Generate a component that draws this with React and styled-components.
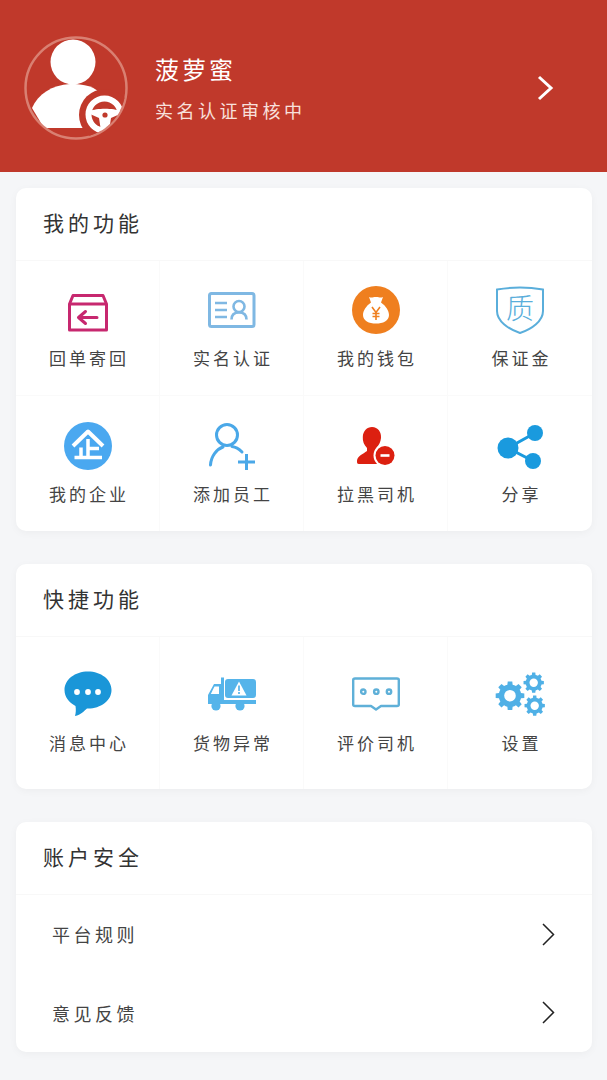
import React from "react";
import styled, { createGlobalStyle } from "styled-components";

const GlobalStyle = createGlobalStyle`
  html, body {
    margin: 0;
    padding: 0;
    background: #f5f6f8;
    font-family: "Noto Sans CJK SC", "Noto Sans", sans-serif;
    font-weight: 400;
  }
`;

const AvatarIcon = () => (
  <svg width="104" height="104" viewBox="0 0 104 104">
    <defs>
      <clipPath id="avatarClip">
        <circle cx="52" cy="52" r="49.5" />
      </clipPath>
    </defs>
    <circle cx="52" cy="52" r="50.5" fill="none" stroke="#d98072" strokeWidth="2.5" />
    <g clipPath="url(#avatarClip)">
      <circle cx="49" cy="26" r="22.5" fill="#fff" />
      <path d="M8 72C14 58 28 49 46 48C60 48 72 50 78 60L78 92H20Z" fill="#fff" />
      <circle cx="81" cy="79" r="26" fill="#c0392b" />
      <circle cx="80.500" cy="78.500" r="16" fill="none" stroke="#fff" strokeWidth="6" />
      <path d="M66 75C72 72 90 72 96 75L96 78L87 82L85 95L77 95L75 82L66 78Z" fill="#fff" />
      <circle cx="81" cy="79" r="2.600" fill="#c0392b" />
    </g>
  </svg>
);

const ReturnIcon = () => (
  <svg width="48" height="48" viewBox="0 0 48 48" fill="none" stroke="#c7286f">
    <path d="M5.500 44V18L9 9.500H39L42.500 18V44Z" strokeWidth="3" strokeLinejoin="round" />
    <path d="M5.500 18H42.500" strokeWidth="2.800" />
    <path d="M33 31.500H15M21.500 25.500L14.500 31.500L21.500 37.500" strokeWidth="3" strokeLinecap="round" strokeLinejoin="round" />
  </svg>
);

const IdCardIcon = () => (
  <svg width="48" height="48" viewBox="0 0 48 48" fill="none" stroke="#7fb8e3">
    <rect x="1.500" y="7.500" width="44.500" height="33" rx="2" strokeWidth="3" />
    <path d="M7 17H19M7 24H19M7 31H19" strokeWidth="2.600" />
    <circle cx="31" cy="20.500" r="5.500" strokeWidth="2.600" />
    <path d="M23.500 33.500C23.500 28.500 27 26.500 31 26.500C35 26.500 38.500 28.500 38.500 33.500" strokeWidth="2.600" />
  </svg>
);

const WalletIcon = () => (
  <svg width="48" height="48" viewBox="0 0 48 48">
    <circle cx="24" cy="24" r="24" fill="#ef7f1f" />
    <path d="M17 11C20 12.500 22 10.500 24 11C26 10.500 28 12.500 31 11L29 16.500C34 20 37 25 37 29C37 35 31 37.500 24 37.500C17 37.500 11 35 11 29C11 25 14 20 19 16.500Z" fill="#fff" />
    <path d="M20 21L24 26.500L28 21M24 26.500V34M20.500 27.500H27.500M20.500 30.500H27.500" fill="none" stroke="#ef7f1f" strokeWidth="1.600" />
  </svg>
);

const ShieldIcon = () => (
  <svg width="48" height="48" viewBox="0 0 48 48">
    <path d="M1 3.500C16 1 32 1 47 3.500V25C47 35 36 43 24 47C12 43 1 35 1 25Z" fill="none" stroke="#5aaedb" strokeWidth="2" />
    <ShieldGlyph x="24" y="33" textAnchor="middle">质</ShieldGlyph>
  </svg>
);

const CompanyIcon = () => (
  <svg width="48" height="48" viewBox="0 0 48 48">
    <circle cx="24" cy="24" r="24" fill="#4aa8f0" />
    <path d="M9 24L24 9.500L39 24" fill="none" stroke="#fff" strokeWidth="4" strokeLinejoin="round" />
    <path d="M10.500 35.500H38M17 25.500V35.500M24 17V35.500M24 26.500H35" fill="none" stroke="#fff" strokeWidth="3.500" />
  </svg>
);

const AddUserIcon = () => (
  <svg width="48" height="48" viewBox="0 0 48 48" fill="none" stroke="#4aa8e8" strokeWidth="3">
    <circle cx="19" cy="13" r="10.500" />
    <path d="M2.500 43C3 34 9 27 15 25M24 24.500C28 25 31 27 34 30" strokeLinecap="round" />
    <path d="M30 40H47M38.500 32V48" />
  </svg>
);

const BlockUserIcon = () => (
  <svg width="48" height="48" viewBox="0 0 48 48">
    <path d="M20 5C26 5 29.500 10 29 16C28.600 20 27 23 25 25L25 27C27 28.500 30 29 33 31L33 42H7C5 42 5 41 5 39C5 34 11 32 15 29L15 26C12 23 10.500 19 10.800 15C11 9 15 5 20 5Z" fill="#dc2010" />
    <circle cx="33" cy="33.500" r="11.500" fill="#fff" />
    <circle cx="33" cy="33.500" r="9.500" fill="#dc2010" />
    <rect x="28.500" y="32.200" width="9" height="2.600" fill="#fff" />
  </svg>
);

const ShareIcon = () => (
  <svg width="48" height="48" viewBox="0 0 48 48" fill="#1a9ade">
    <path d="M12 26L39 11M12 26L37 39" stroke="#1a9ade" strokeWidth="3" />
    <circle cx="12" cy="26" r="10.500" />
    <circle cx="39" cy="11" r="8" />
    <circle cx="37" cy="39" r="8" />
  </svg>
);

const MessageIcon = () => (
  <svg width="48" height="48" viewBox="0 0 48 48">
    <path d="M24 0.500C37 0.500 47.500 8.500 47.500 19C47.500 30 36 38 23 37.500C20 40 17 44 11 45C12 42 12 38 11.500 35C5 31.500 0.500 26 0.500 19C0.500 8.500 11 0.500 24 0.500Z" fill="#1a96d8" />
    <circle cx="13" cy="21" r="2.900" fill="#fff" />
    <circle cx="24" cy="21" r="2.900" fill="#fff" />
    <circle cx="34" cy="21" r="2.900" fill="#fff" />
  </svg>
);

const TruckIcon = () => (
  <svg width="48" height="48" viewBox="0 0 48 48">
    <rect x="17" y="8" width="31" height="19" rx="3" fill="#55b4ea" />
    <path d="M13 6.500H16V29H48V33H0V24L6 13H13Z" fill="#55b4ea" />
    <circle cx="8" cy="35" r="4.600" fill="#55b4ea" />
    <circle cx="32" cy="35" r="4.600" fill="#55b4ea" />
    <path d="M6.500 15.500H11V23H2.800Z" fill="#fff" />
    <path d="M31 10.500L38.500 24.500H23.500Z" fill="#fff" />
    <path d="M31 14.500V20M31 21V23" stroke="#55b4ea" strokeWidth="1.700" />
  </svg>
);

const CommentIcon = () => (
  <svg width="48" height="48" viewBox="0 0 48 48" fill="none" stroke="#5fb0d8" strokeWidth="2.400">
    <path d="M3 7.500H45C46 7.500 46.800 8 46.800 9V33.500C46.800 34.500 46 35 45 35H29L24 38.500L19 35H3C2 35 1.200 34.500 1.200 33.500V9C1.200 8 2 7.500 3 7.500Z" strokeLinejoin="round" />
    <circle cx="11.300" cy="20.700" r="2.200" />
    <circle cx="24.300" cy="20.700" r="2.200" />
    <circle cx="37" cy="20.700" r="2.200" />
  </svg>
);

const gearPath = (cx, cy, r, teeth) => {
  const pts = [];
  const toothDepth = r * 0.78;
  const step = (Math.PI * 2) / teeth;
  const at = (rad, ang) => `${(cx + rad * Math.cos(ang)).toFixed(2)} ${(cy + rad * Math.sin(ang)).toFixed(2)}`;
  for (let i = 0; i < teeth; i++) {
    const a = i * step;
    pts.push(at(toothDepth, a - step * 0.5), at(toothDepth, a - step * 0.3), at(r, a - step * 0.2), at(r, a + step * 0.2), at(toothDepth, a + step * 0.3));
  }
  return `M${pts.join("L")}Z`;
};

const GearsIcon = () => (
  <svg width="50" height="48" viewBox="0 0 50 48" fill="#4fb0e6">
    <path d={gearPath(15, 24.700, 14.500, 8)} />
    <circle cx="15" cy="24.700" r="5.800" fill="#fff" />
    <path d={gearPath(38.700, 11.700, 10.300, 8)} />
    <circle cx="38.700" cy="11.700" r="4.200" fill="#fff" />
    <path d={gearPath(39.700, 34.700, 10.300, 8)} />
    <circle cx="39.700" cy="34.700" r="4.200" fill="#fff" />
  </svg>
);

const myFunctions = [
  { label: "回单寄回", Icon: ReturnIcon },
  { label: "实名认证", Icon: IdCardIcon },
  { label: "我的钱包", Icon: WalletIcon },
  { label: "保证金", Icon: ShieldIcon },
  { label: "我的企业", Icon: CompanyIcon },
  { label: "添加员工", Icon: AddUserIcon },
  { label: "拉黑司机", Icon: BlockUserIcon },
  { label: "分享", Icon: ShareIcon },
];

const quickFunctions = [
  { label: "消息中心", Icon: MessageIcon },
  { label: "货物异常", Icon: TruckIcon },
  { label: "评价司机", Icon: CommentIcon },
  { label: "设置", Icon: GearsIcon },
];

const accountLinks = ["平台规则", "意见反馈"];

export default function App() {
  return (
    <Page>
      <GlobalStyle />
      <Header>
        <AvatarIcon />
        <UserInfo>
          <UserName>菠萝蜜</UserName>
          <UserStatus>实名认证审核中</UserStatus>
        </UserInfo>
        <svg width="18" height="26" viewBox="0 0 18 26">
          <path d="M3 2L15 13L3 24" fill="none" stroke="#fff" strokeWidth="3" />
        </svg>
      </Header>
      <Content>
        <Card>
          <CardTitle>我的功能</CardTitle>
          <FeatureGrid>
            {myFunctions.map(({ label, Icon }, i) => (
              <FeatureCell key={label} $height={135} $last={i % 4 === 3} $bottom={i < 4}>
                <IconBox>
                  <Icon />
                </IconBox>
                <FeatureLabel>{label}</FeatureLabel>
              </FeatureCell>
            ))}
          </FeatureGrid>
        </Card>
        <Card>
          <CardTitle>快捷功能</CardTitle>
          <FeatureGrid>
            {quickFunctions.map(({ label, Icon }, i) => (
              <FeatureCell key={label} $height={152} $last={i === 3}>
                <IconBox>
                  <Icon />
                </IconBox>
                <FeatureLabel>{label}</FeatureLabel>
              </FeatureCell>
            ))}
          </FeatureGrid>
        </Card>
        <Card>
          <CardTitle>账户安全</CardTitle>
          {accountLinks.map(link => (
            <LinkRow key={link}>
              <LinkLabel>{link}</LinkLabel>
              <svg width="14" height="23" viewBox="0 0 14 23">
                <path d="M2 1L12.500 11.500L2 22" fill="none" stroke="#222" strokeWidth="1.500" />
              </svg>
            </LinkRow>
          ))}
        </Card>
      </Content>
    </Page>
  );
}

const Page = styled.div`
  width: 607px;
  height: 1080px;
  overflow: hidden;
  background: #f5f6f8;
`;

const Header = styled.header`
  height: 172px;
  box-sizing: border-box;
  padding: 4px 53px 0 24px;
  background: #c0392b;
  display: flex;
  align-items: center;
`;

const UserInfo = styled.div`
  flex: 1;
  margin-left: 27px;
  display: flex;
  flex-direction: column;
  gap: 12px;
  color: #fff;
`;

const UserName = styled.div`
  font-size: 24px;
  line-height: 32px;
  letter-spacing: 3px;
`;

const UserStatus = styled.div`
  font-size: 18px;
  line-height: 26px;
  letter-spacing: 3.500px;
  color: #f8e0dc;
`;

const Content = styled.main`
  padding: 16px 15px 0 16px;
  display: flex;
  flex-direction: column;
  gap: 33px;
`;

const Card = styled.section`
  background: #fff;
  border-radius: 10px;
  box-shadow: 0 2px 8px rgba(0, 0, 0, 0.04);
  overflow: hidden;
`;

const CardTitle = styled.h2`
  margin: 0;
  height: 73px;
  box-sizing: border-box;
  padding: 0 0 5px 27px;
  display: flex;
  align-items: center;
  border-bottom: 1px solid #f8f8f8;
  font-size: 21px;
  font-weight: 400;
  letter-spacing: 4px;
  color: #333;
`;

const FeatureGrid = styled.div`
  display: grid;
  grid-template-columns: repeat(4, 1fr);
`;

const FeatureCell = styled.div`
  height: ${p => p.$height}px;
  box-sizing: border-box;
  display: flex;
  flex-direction: column;
  align-items: center;
  justify-content: center;
  gap: 11px;
  border-right: ${p => (p.$last ? "none" : "1px solid #fafafa")};
  border-bottom: ${p => (p.$bottom ? "1px solid #fafafa" : "none")};
`;

const IconBox = styled.div`
  width: 50px;
  height: 48px;
  display: flex;
  justify-content: center;
`;

const ShieldGlyph = styled.text`
  font-size: 28px;
  font-weight: 300;
  fill: #5aaedb;
`;

const FeatureLabel = styled.div`
  font-size: 17px;
  line-height: 25px;
  letter-spacing: 3px;
  padding-left: 3px;
  color: #444;
`;

const LinkRow = styled.div`
  height: 78.500px;
  box-sizing: border-box;
  padding: 0 37px 0 36px;
  display: flex;
  align-items: center;
  justify-content: space-between;
`;

const LinkLabel = styled.div`
  font-size: 18px;
  letter-spacing: 3.500px;
  color: #444;
`;
